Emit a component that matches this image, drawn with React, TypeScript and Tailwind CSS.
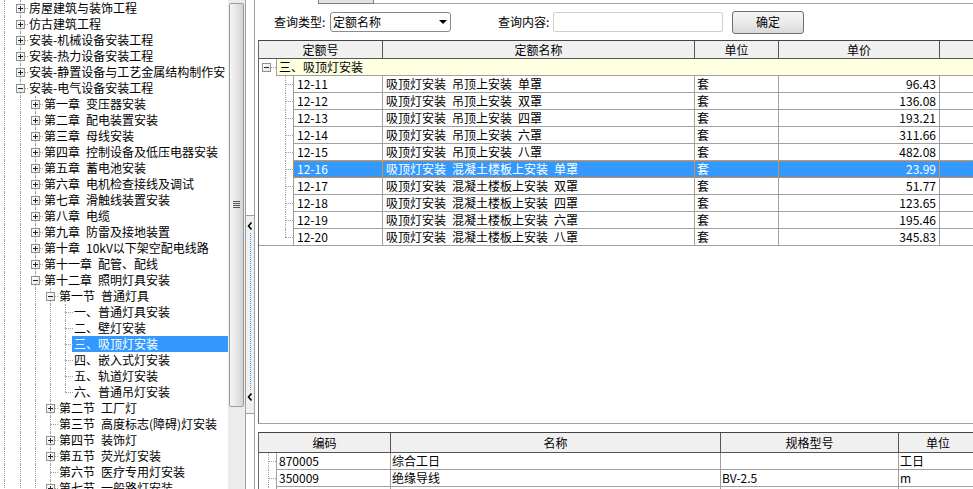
import React from "react";

type Kind = "plus" | "minus" | "leaf";
type TNode = { label: string; level: number; kind: Kind; last?: boolean; selected?: boolean };

const S = "\u2002";

const tree: TNode[] = [
  { label: "房屋建筑与装饰工程", level: 0, kind: "plus" },
  { label: "仿古建筑工程", level: 0, kind: "plus" },
  { label: "安装-机械设备安装工程", level: 0, kind: "plus" },
  { label: "安装-热力设备安装工程", level: 0, kind: "plus" },
  { label: "安装-静置设备与工艺金属结构制作安", level: 0, kind: "plus" },
  { label: "安装-电气设备安装工程", level: 0, kind: "minus" },
  { label: `第一章${S}变压器安装`, level: 1, kind: "plus" },
  { label: `第二章${S}配电装置安装`, level: 1, kind: "plus" },
  { label: `第三章${S}母线安装`, level: 1, kind: "plus" },
  { label: `第四章${S}控制设备及低压电器安装`, level: 1, kind: "plus" },
  { label: `第五章${S}蓄电池安装`, level: 1, kind: "plus" },
  { label: `第六章${S}电机检查接线及调试`, level: 1, kind: "plus" },
  { label: `第七章${S}滑触线装置安装`, level: 1, kind: "plus" },
  { label: `第八章${S}电缆`, level: 1, kind: "plus" },
  { label: `第九章${S}防雷及接地装置`, level: 1, kind: "plus" },
  { label: `第十章${S}10kV以下架空配电线路`, level: 1, kind: "plus" },
  { label: `第十一章${S}配管、配线`, level: 1, kind: "plus" },
  { label: `第十二章${S}照明灯具安装`, level: 1, kind: "minus" },
  { label: `第一节${S}普通灯具`, level: 2, kind: "minus" },
  { label: "一、普通灯具安装", level: 3, kind: "leaf" },
  { label: "二、壁灯安装", level: 3, kind: "leaf" },
  { label: "三、吸顶灯安装", level: 3, kind: "leaf", selected: true },
  { label: "四、嵌入式灯安装", level: 3, kind: "leaf" },
  { label: "五、轨道灯安装", level: 3, kind: "leaf" },
  { label: "六、普通吊灯安装", level: 3, kind: "leaf", last: true },
  { label: `第二节${S}工厂灯`, level: 2, kind: "plus" },
  { label: `第三节${S}高度标志(障碍)灯安装`, level: 2, kind: "leaf" },
  { label: `第四节${S}装饰灯`, level: 2, kind: "plus" },
  { label: `第五节${S}荧光灯安装`, level: 2, kind: "plus" },
  { label: `第六节${S}医疗专用灯安装`, level: 2, kind: "leaf" },
  { label: `第七节${S}一般路灯安装`, level: 2, kind: "plus" },
];

const quotaRows = [
  ["12-11", `吸顶灯安装${S}吊顶上安装${S}单罩`, "套", "96.43"],
  ["12-12", `吸顶灯安装${S}吊顶上安装${S}双罩`, "套", "136.08"],
  ["12-13", `吸顶灯安装${S}吊顶上安装${S}四罩`, "套", "193.21"],
  ["12-14", `吸顶灯安装${S}吊顶上安装${S}六罩`, "套", "311.66"],
  ["12-15", `吸顶灯安装${S}吊顶上安装${S}八罩`, "套", "482.08"],
  ["12-16", `吸顶灯安装${S}混凝土楼板上安装${S}单罩`, "套", "23.99"],
  ["12-17", `吸顶灯安装${S}混凝土楼板上安装${S}双罩`, "套", "51.77"],
  ["12-18", `吸顶灯安装${S}混凝土楼板上安装${S}四罩`, "套", "123.65"],
  ["12-19", `吸顶灯安装${S}混凝土楼板上安装${S}六罩`, "套", "195.46"],
  ["12-20", `吸顶灯安装${S}混凝土楼板上安装${S}八罩`, "套", "345.83"],
];

const matRows = [
  ["870005", "综合工日", "", "工日"],
  ["350009", "绝缘导线", "BV-2.5", "m"],
  ["280012", "铜接线端子", "", "个"],
];

function Box({ open }: { open: boolean }) {
  return (
    <div className="relative w-[9px] h-[9px] border border-[#919191] bg-gradient-to-br from-white to-[#e4e4e4]">
      <div className="absolute left-[1px] top-[3px] w-[5px] h-px bg-[#222]" />
      {!open && <div className="absolute left-[3px] top-[1px] w-px h-[5px] bg-[#222]" />}
    </div>
  );
}

function TreeRow({ n }: { n: TNode }) {
  const guides = Array.from({ length: n.level });
  return (
    <div className="flex h-[16px] shrink-0 whitespace-nowrap">
      <div className="relative w-[13px] shrink-0">
        <div className="absolute left-[4px] top-0 h-full border-l border-dotted border-[#a0a0a0]" />
      </div>
      {guides.map((_, i) => (
        <div key={i} className="relative w-[15px] shrink-0">
          <div className="absolute left-[7px] top-0 h-full border-l border-dotted border-[#a0a0a0]" />
        </div>
      ))}
      <div className="relative w-[15px] shrink-0">
        <div
          className={`absolute left-[7px] top-0 border-l border-dotted border-[#a0a0a0] ${
            n.last ? "h-[8px]" : "h-full"
          }`}
        />
        <div className="absolute left-[7px] top-[8px] w-[8px] border-t border-dotted border-[#a0a0a0]" />
        {n.kind !== "leaf" && (
          <div className="absolute left-[3px] top-[4px]">
            <Box open={n.kind === "minus"} />
          </div>
        )}
      </div>
      <div
        className={
          n.selected
            ? "flex-1 -ml-[1px] pl-[2px] bg-[#3399ff] text-white leading-[16px]"
            : "pl-[1px] leading-[16px]"
        }
      >
        {n.label}
      </div>
    </div>
  );
}

function Chevron() {
  return (
    <svg width="6" height="8" viewBox="0 0 6 8">
      <path d="M4.5 0.5 L1.5 4 L4.5 7.5" stroke="#000" strokeWidth="1.6" fill="none" />
    </svg>
  );
}

function QuotaRow({ r, sel, last }: { r: string[]; sel?: boolean; last?: boolean }) {
  const cb = last ? "" : "border-b";
  const bc = sel ? "border-[#d09050]" : "border-[#a0a0a0]";
  return (
    <div className={`flex h-[17px] shrink-0 ${last ? "border-b border-[#a0a0a0]" : ""}`}>
      <div className="relative w-[34px] shrink-0">
        <div
          className={`absolute left-[26px] top-0 border-l border-dotted border-[#a0a0a0] ${
            last ? "h-[8px]" : "h-full"
          }`}
        />
        <div className="absolute left-[26px] top-[8px] w-[8px] border-t border-dotted border-[#a0a0a0]" />
      </div>
      <div
        className={`flex flex-1 leading-[16px] ${
          sel ? "bg-[#3399ff] text-white outline-1 outline-dotted outline-[#e0802a] -outline-offset-1" : ""
        }`}
      >
        <div className={`w-[90px] shrink-0 border-l border-r ${cb} ${bc} pl-[3px]`}>{r[0]}</div>
        <div className={`w-[312px] shrink-0 border-r ${cb} ${bc} pl-[3px]`}>{r[1]}</div>
        <div className={`w-[84px] shrink-0 border-r ${cb} ${bc} pl-[2px]`}>{r[2]}</div>
        <div className={`w-[161px] shrink-0 border-r ${cb} ${bc} pr-[3px] text-right`}>{r[3]}</div>
        <div className={`flex-1 ${cb} ${bc}`} />
      </div>
    </div>
  );
}

function MatRow({ r }: { r: string[] }) {
  return (
    <div className="flex h-[17px] shrink-0 leading-[16px]">
      <div className="relative w-[17px] shrink-0">
        <div className="absolute left-[9px] top-0 h-full border-l border-dotted border-[#a0a0a0]" />
        <div className="absolute left-[9px] top-[8px] w-[8px] border-t border-dotted border-[#a0a0a0]" />
      </div>
      <div className="w-[115px] shrink-0 border-l border-r border-b border-[#a0a0a0] pl-[2px]">{r[0]}</div>
      <div className="w-[330px] shrink-0 border-r border-b border-[#a0a0a0] pl-[1px]">{r[1]}</div>
      <div className="w-[178px] shrink-0 border-r border-b border-[#a0a0a0] pl-[1px]">{r[2]}</div>
      <div className="flex-1 border-b border-[#a0a0a0] pl-[1px]">{r[3]}</div>
    </div>
  );
}

export default function App() {
  return (
    <div className="w-[973px] h-[489px] overflow-hidden flex bg-white text-black text-[12px] font-['Noto_Sans_CJK_SC','Noto_Sans',sans-serif]">
      {/* Left tree */}
      <div className="w-[228px] h-full shrink-0 overflow-hidden flex flex-col">
        {tree.map((n, i) => (
          <TreeRow key={i} n={n} />
        ))}
      </div>
      {/* Scrollbar */}
      <div className="w-[17px] h-full shrink-0 bg-[#ececec] flex flex-col items-center pt-[3px]">
        <div className="w-[15px] h-[404px] rounded-[2px] border border-[#9a9a9a] bg-gradient-to-r from-[#f6f6f6] via-[#e6e6e6] to-[#d2d2d2] flex items-center justify-center">
          <svg width="7" height="8" viewBox="0 0 7 8">
            <path d="M0 0.5h7M0 2.5h7M0 4.5h7M0 6.5h7" stroke="#555" strokeWidth="1" />
          </svg>
        </div>
      </div>
      <div className="w-px h-full shrink-0 bg-[#a0a0a0]" />
      {/* Splitter */}
      <div className="w-[8px] h-full shrink-0 flex flex-col">
        <div className="h-[215px] shrink-0" />
        <div className="h-[199px] shrink-0 border-t border-b border-[#a0a0a0] bg-[#f0f0f0] flex flex-col items-center pt-[6px] pb-[12px]">
          <Chevron />
          <div className="flex-1 my-[3px] border-l border-dotted border-[#3399ff]" />
          <Chevron />
        </div>
      </div>
      <div className="w-px h-full shrink-0 bg-[#a0a0a0]" />
      {/* Right panel */}
      <div className="flex-1 min-w-0 h-full overflow-hidden flex flex-col pl-[3px]">
        {/* tab strip */}
        <div className="flex h-[4px] shrink-0 -ml-[3px]">
          <div className="w-[63px] shrink-0" />
          <div className="w-[56px] shrink-0 overflow-hidden border-l border-r border-b border-[#808080] bg-[#e2e2e2]" />
          <div className="flex-1 border-b border-[#a0a0a0]" />
        </div>
        {/* query bar */}
        <div className="flex h-[36px] shrink-0 items-center pl-[16px] whitespace-nowrap">
          <span className="w-[54px] shrink-0">查询类型:</span>
          <div className="ml-[2px] w-[121px] h-[20px] shrink-0 rounded-[3px] border border-[#8a8a8a] bg-white flex items-center justify-between pl-[2px] pr-[3px]">
            <span className="leading-[16px]">定额名称</span>
            <svg width="8" height="4" viewBox="0 0 8 4">
              <path d="M0 0h8L4 4z" fill="#000" />
            </svg>
          </div>
          <span className="ml-[47px] w-[54px] shrink-0">查询内容:</span>
          <div className="ml-[1px] w-[170px] h-[20px] shrink-0 rounded-[2px] border border-[#cfcfcf] bg-white" />
          <div className="ml-[9px] w-[72px] h-[23px] shrink-0 rounded-[3px] border border-[#707070] bg-gradient-to-b from-[#f3f3f3] via-[#ebebeb] to-[#d8d8d8] flex items-center justify-center">
            确定
          </div>
        </div>
        {/* quota grid */}
        <div className="w-[820px] h-[384px] shrink-0 border-t border-l border-b border-t-[#444] border-l-[#666] border-b-[#a0a0a0] flex flex-col">
          <div className="flex h-[18px] shrink-0 bg-[#f0f0f0] border-b border-[#555] leading-[17px] text-center">
            <div className="w-[124px] shrink-0 border-r border-[#555]">定额号</div>
            <div className="w-[312px] shrink-0 border-r border-[#555]">定额名称</div>
            <div className="w-[84px] shrink-0 border-r border-[#555]">单位</div>
            <div className="w-[161px] shrink-0 border-r border-[#555]">单价</div>
            <div className="flex-1" />
          </div>
          <div className="flex h-[17px] shrink-0">
            <div className="relative w-[17px] shrink-0">
              <div className="absolute left-[3px] top-[4px]">
                <Box open />
              </div>
              <div className="absolute left-[11px] top-[8px] w-[6px] border-t border-dotted border-[#a0a0a0]" />
            </div>
            <div className="flex-1 bg-[#ffffe1] border-l border-b border-[#a0a0a0] pl-[2px] leading-[16px]">
              三、吸顶灯安装
            </div>
          </div>
          {quotaRows.map((r, i) => (
            <QuotaRow key={i} r={r} sel={i === 5} last={i === quotaRows.length - 1} />
          ))}
          <div className="flex-1" />
        </div>
        {/* material grid */}
        <div className="w-[820px] mt-[8px] flex-1 border-t border-l border-t-[#444] border-l-[#666] flex flex-col">
          <div className="flex h-[20px] shrink-0 bg-[#f0f0f0] border-b border-[#555] leading-[19px] text-center">
            <div className="w-[132px] shrink-0 border-r border-[#555]">编码</div>
            <div className="w-[330px] shrink-0 border-r border-[#555]">名称</div>
            <div className="w-[178px] shrink-0 border-r border-[#555]">规格型号</div>
            <div className="flex-1 text-left pl-[27px]">单位</div>
          </div>
          {matRows.map((r, i) => (
            <MatRow key={i} r={r} />
          ))}
        </div>
      </div>
    </div>
  );
}
